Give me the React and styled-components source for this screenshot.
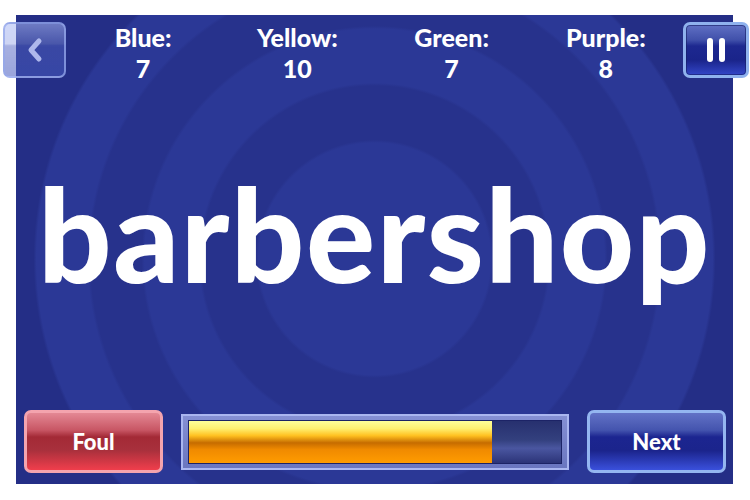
import React from 'react'
import styled, { createGlobalStyle } from 'styled-components'

const GlobalStyle = createGlobalStyle`
  html, body {
    margin: 0;
    padding: 0;
    background: #ffffff;
  }
  body {
    font-family: 'Lato', 'Noto Sans', sans-serif;
  }
`

const Page = styled.div`
  width: 750px;
  height: 500px;
  padding: 15px 17px 16px 16px;
  box-sizing: border-box;
`

const Panel = styled.main`
  width: 717px;
  height: 469px;
  display: flex;
  flex-direction: column;
  box-sizing: border-box;
  background:
    radial-gradient(
      circle at 50% 52%,
      #2b3896 0,
      #2b3896 116px,
      #27328c 119px,
      #27328c 173px,
      #2b3896 176px,
      #2b3896 230px,
      #27328c 233px,
      #27328c 284px,
      #2b3896 287px,
      #2b3896 338px,
      #242e86 341px,
      #242e86 100%
    );
`

const TopBar = styled.div`
  display: flex;
  align-items: flex-start;
  height: 56px;
  margin: 7px -16px 0 -13px;
`

const IconButton = styled.button`
  flex: none;
  width: ${(p) => p.$w}px;
  height: 56px;
  padding: 0;
  display: flex;
  align-items: center;
  justify-content: center;
  border-radius: 7px;
  box-sizing: border-box;
  cursor: pointer;
`

const BackButton = styled(IconButton)`
  border: 2px solid rgba(150, 168, 235, 0.75);
  background:
    linear-gradient(180deg, rgba(170, 185, 245, 0.55) 0%, rgba(130, 148, 225, 0.4) 38%, rgba(80, 98, 195, 0.5) 42%, rgba(70, 90, 190, 0.55) 100%);
`

const PauseButton = styled(IconButton)`
  border: 3px solid #8fb2ee;
  background:
    linear-gradient(180deg, #6070c4 0%, #4050aa 30%, #1d2890 42%, #1a248a 70%, #3346c8 100%);
  box-shadow: inset 0 0 0 1px rgba(20, 30, 100, 0.6);
`

const Scores = styled.div`
  flex: 1;
  display: grid;
  grid-template-columns: repeat(4, 1fr);
`

const Score = styled.div`
  display: flex;
  flex-direction: column;
  align-items: center;
  color: #ffffff;
  font-weight: 900;
  font-size: 25px;
  line-height: 31px;
`

const WordArea = styled.div`
  flex: 1;
  display: flex;
  align-items: center;
  justify-content: center;
`

const Word = styled.h1`
  margin: 0 0 22px;
  color: #ffffff;
  font-family: 'Lato', 'Noto Sans', sans-serif;
  font-weight: 900;
  font-size: 129px;
  letter-spacing: 1.5px;
  line-height: 1;
`

const BottomBar = styled.div`
  display: flex;
  align-items: center;
  gap: 18px;
  height: 63px;
  margin: 0 7px 11px 8px;
`

const ActionButton = styled.button`
  flex: none;
  width: 139px;
  height: 63px;
  border-radius: 7px;
  box-sizing: border-box;
  color: #ffffff;
  font-family: 'Lato', 'Noto Sans', sans-serif;
  font-weight: 900;
  font-size: 22px;
  cursor: pointer;
  border: 3px solid ${(p) => p.$edge};
  background: ${(p) => p.$fill};
`

const Meter = styled.div`
  flex: 1;
  height: 56px;
  padding: 4px 5px;
  box-sizing: border-box;
  border: 2px solid #aab6f0;
  background: linear-gradient(180deg, #8590d4 0%, #6a76c0 100%);
`

const Track = styled.div`
  height: 100%;
  display: flex;
  border: 1px solid #1c2366;
  box-sizing: border-box;
  background: linear-gradient(180deg, #27306f 0%, #33407e 45%, #4a56a0 65%, #2c3478 100%);
`

const Fill = styled.div`
  height: 100%;
  background: linear-gradient(
    180deg,
    #ffff9a 0%,
    #fff070 18%,
    #ffc020 35%,
    #c66c00 52%,
    #f08a00 68%,
    #ff9c00 100%
  );
`

const scores = [
  { team: 'Blue', points: 7 },
  { team: 'Yellow', points: 10 },
  { team: 'Green', points: 7 },
  { team: 'Purple', points: 8 },
]

const redFill = `linear-gradient(180deg, #e48894 0%, #c85664 30%, #a32a36 42%, #a8303c 65%, #f03e4c 100%)`
const blueFill = `linear-gradient(180deg, #6272c6 0%, #4454ae 30%, #1c2590 42%, #1b248c 66%, #3a50dc 100%)`

export default function App() {
  const progress = 0.815
  return (
    <>
      <GlobalStyle />
      <Page>
        <Panel>
          <TopBar>
            <BackButton $w={63} aria-label="Back">
              <svg width="16" height="26" viewBox="0 0 16 26">
                <path d="M12 4 L4 13 L12 22" fill="none" stroke="#aeb8ec" strokeWidth="5" strokeLinecap="round" strokeLinejoin="round" />
              </svg>
            </BackButton>
            <Scores>
              {scores.map((s) => (
                <Score key={s.team}>
                  <span>{s.team}:</span>
                  <span>{s.points}</span>
                </Score>
              ))}
            </Scores>
            <PauseButton $w={66} aria-label="Pause">
              <svg width="22" height="26" viewBox="0 0 22 26">
                <rect x="2" y="1" width="6" height="24" rx="3" fill="#ffffff" />
                <rect x="14" y="1" width="6" height="24" rx="3" fill="#ffffff" />
              </svg>
            </PauseButton>
          </TopBar>
          <WordArea>
            <Word>barbershop</Word>
          </WordArea>
          <BottomBar>
            <ActionButton $edge="#f4a4ae" $fill={redFill}>Foul</ActionButton>
            <Meter>
              <Track>
                <Fill style={{ width: `${progress * 100}%` }} />
              </Track>
            </Meter>
            <ActionButton $edge="#94b6f0" $fill={blueFill}>Next</ActionButton>
          </BottomBar>
        </Panel>
      </Page>
    </>
  )
}
